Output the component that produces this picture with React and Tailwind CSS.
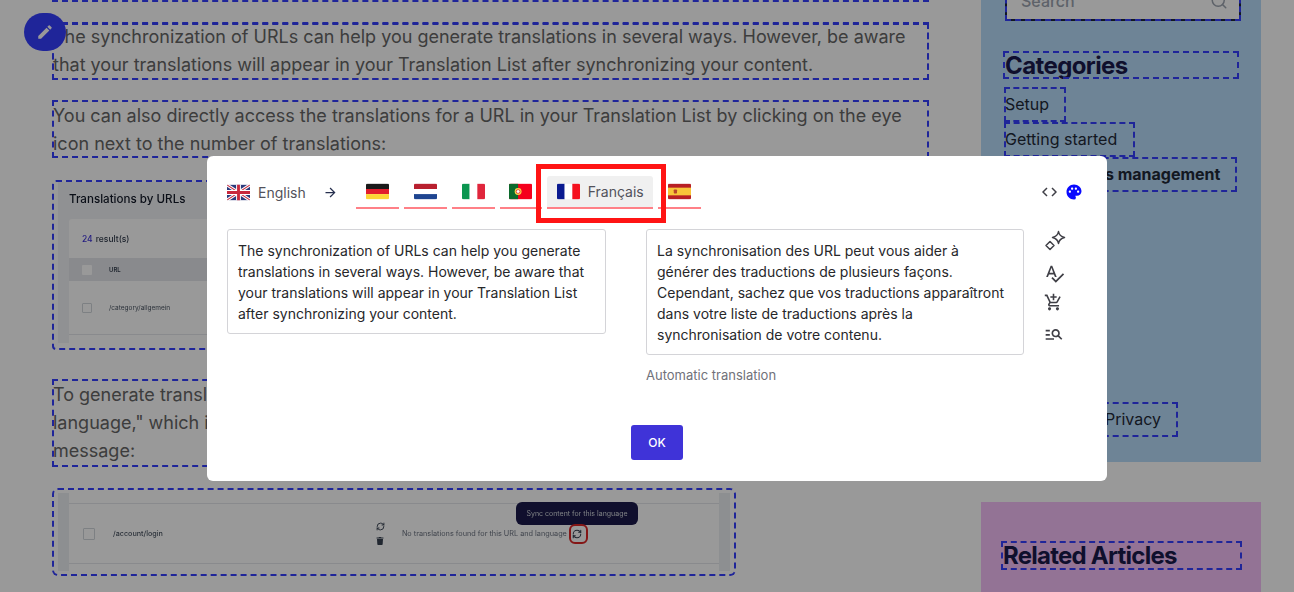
import React from 'react';
import { MdEdit, MdPalette, MdOutlineAddShoppingCart, MdOutlineManageSearch, MdSpellcheck, MdArrowForward } from 'react-icons/md';
import { Search, RefreshCw } from 'lucide-react';
import { FaTrash } from 'react-icons/fa';

// editor highlight drawn around every editable block
const box = 'outline-2 outline-dashed -outline-offset-2 outline-[#353eff]';

const Flag = ({ children }) => (
  <svg viewBox="0 0 24 16" className="w-[23px] h-[17px] rounded-[2px] shrink-0">{children}</svg>
);

const UK = () => (
  <Flag>
    <rect width="24" height="16" fill="#2b3a7c" />
    <path d="M0 0L24 16M24 0L0 16" stroke="#fff" strokeWidth="3.2" />
    <path d="M0 0L24 16M24 0L0 16" stroke="#c8283c" strokeWidth="1.1" />
    <path d="M12 0V16M0 8H24" stroke="#fff" strokeWidth="5" />
    <path d="M12 0V16M0 8H24" stroke="#c8283c" strokeWidth="3" />
  </Flag>
);
const DE = () => (
  <Flag>
    <rect width="24" height="5.4" fill="#1a1a1a" />
    <rect y="5.4" width="24" height="5.3" fill="#e11d2c" />
    <rect y="10.7" width="24" height="5.3" fill="#fcd535" />
  </Flag>
);
const NL = () => (
  <Flag>
    <rect width="24" height="5.4" fill="#b8202f" />
    <rect y="5.4" width="24" height="5.3" fill="#fff" />
    <rect y="10.7" width="24" height="5.3" fill="#1f4590" />
  </Flag>
);
const IT = () => (
  <Flag>
    <rect width="8" height="16" fill="#0b9650" />
    <rect x="8" width="8" height="16" fill="#fff" />
    <rect x="16" width="8" height="16" fill="#e0263c" />
  </Flag>
);
const PT = () => (
  <Flag>
    <rect width="24" height="16" fill="#f5001c" />
    <rect width="9.5" height="16" fill="#0b6a2c" />
    <circle cx="9.5" cy="8" r="3.6" fill="#f8d648" />
    <circle cx="9.5" cy="8" r="2" fill="#fff" stroke="#d22" strokeWidth="0.8" />
  </Flag>
);
const FR = () => (
  <Flag>
    <rect width="8" height="16" fill="#0a1a90" />
    <rect x="8" width="8" height="16" fill="#fff" />
    <rect x="16" width="8" height="16" fill="#f5111f" />
  </Flag>
);
const ES = () => (
  <Flag>
    <rect width="24" height="16" fill="#b81f24" />
    <rect y="4" width="24" height="8" fill="#f8c53a" />
    <rect x="6" y="6" width="3.4" height="4.2" rx="0.8" fill="#b8452a" />
  </Flag>
);

const Sparkle = () => (
  <svg viewBox="0 0 24 24" className="w-[24px] h-[24px]" fill="none" stroke="#3f3f46" strokeWidth="1.5" strokeLinejoin="round">
    <path d="M14.500 2.500c.6 3.600 2 5 6 6-4 1-5.400 2.400-6 6-.6-3.600-2-5-6-6 4-1 5.400-2.400 6-6z" />
    <path d="M6 12.500L10 16.500L6 20.500L2 16.500z" />
  </svg>
);

const CodeIcon = () => (
  <svg viewBox="0 0 15 10" className="w-[15px] h-[10px]" fill="none" stroke="#3f3f46" strokeWidth="1.5">
    <path d="M5 1L1 5L5 9M10 1L14 5L10 9" />
  </svg>
);

const Tab = ({ flag, width, label }) => (
  <div className={`${width} h-[33px] flex items-center justify-center gap-[8px] border-b-2 border-[#ff8087] ${label ? 'bg-[#f0f0f0] rounded-t-[3px] pl-[1px]' : ''}`}>
    {flag}
    {label && <span className="text-[14px] text-[#52525b]">{label}</span>}
  </div>
);

function TranslationModal() {
  return (
    <div className="absolute left-[207px] top-[156px] w-[900px] h-[325px] bg-white rounded-[6px] px-[20px] pt-[20px] text-[#27272a]">
      <div className="flex items-center h-[33px] pb-[1px]">
        <UK />
        <span className="ml-[8px] text-[14px] text-[#52525b]">English</span>
        <MdArrowForward className="ml-[17px] w-[15px] h-[15px] text-[#27304f]" />
        <div className="ml-[18px] flex gap-[5px] self-start">
          <Tab flag={<DE />} width="w-[43px]" />
          <Tab flag={<NL />} width="w-[43px]" />
          <Tab flag={<IT />} width="w-[43px]" />
          <Tab flag={<PT />} width="w-[42px]" />
          <Tab flag={<FR />} width="w-[106px]" label="Français" />
          <Tab flag={<ES />} width="w-[43px]" />
        </div>
        <div className="ml-auto mr-[4px] flex items-center gap-[8px]">
          <CodeIcon />
          <MdPalette className="w-[18px] h-[18px] text-[#0a0aff]" />
        </div>
      </div>
      <div className="mt-[20px] flex items-start">
        <div className="w-[379px] h-[105px] border border-[#d4d4d8] rounded-[3px] px-[10px] py-[10px] text-[14px] leading-[21px]">
          The synchronization of URLs can help you generate translations in several ways. However, be aware that your translations will appear in your Translation List after synchronizing your content.
        </div>
        <div className="ml-[40px] w-[378px]">
          <div className="h-[126px] border border-[#d4d4d8] rounded-[3px] px-[10px] py-[10px] text-[14px] leading-[21px]">
            La synchronisation des URL peut vous aider à générer des traductions de plusieurs façons. Cependant, sachez que vos traductions apparaîtront dans votre liste de traductions après la synchronisation de votre contenu.
          </div>
          <p className="mt-[12px] text-[13px] leading-[16px] text-[#71717a]">Automatic translation</p>
        </div>
        <div className="ml-[20px] flex flex-col items-start text-[#3f3f46]">
          <Sparkle />
          <MdSpellcheck className="mt-[10px] w-[21px] h-[21px]" />
          <MdOutlineAddShoppingCart className="mt-[9px] w-[19px] h-[19px]" />
          <MdOutlineManageSearch className="mt-[12px] w-[20px] h-[20px]" />
        </div>
      </div>
      <div className="absolute left-[424px] top-[269px] w-[52px] h-[35px] rounded-[3px] bg-[#3f33d8] flex items-center justify-center text-white text-[12px] font-medium">OK</div>
      <div className="absolute left-[329px] top-[8px] w-[130px] h-[59px] border-[5px] border-[#ff1414]" />
    </div>
  );
}

function UrlsShot() {
  return (
    <div className={`${box} h-[170px] mt-[22px] rounded-[4px] bg-white overflow-hidden`}>
      <div className="h-[161px] ml-[6px] mt-[2px] bg-[#f1f2f5] pt-[8px] pl-[11px] blur-[0.4px] overflow-hidden">
        <div className="text-[11.600px] leading-[18px] font-medium text-[#111827]">Translations by URLs</div>
        <div className="mt-[11px] bg-white h-[200px] rounded-[3px]">
          <div className="h-[39px] pl-[13px] flex items-center text-[8.500px] font-medium text-[#374151]">
            <span className="text-[#3f33d8] mr-[3px]">24</span>result(s)
          </div>
          <div className="h-[23px] bg-[#e5e7eb] pl-[13px] flex items-center text-[6px] font-semibold text-[#374151]">
            <span className="w-[10px] h-[10px] bg-white rounded-[1px] mr-[17px]" />URL
          </div>
          <div className="h-[54px] pl-[13px] flex items-center text-[6.500px] text-[#4b5563] border-b border-[#e5e7eb]">
            <span className="w-[10px] h-[10px] border border-[#d1d5db] rounded-[1px] mr-[17px]" />/category/allgemein
          </div>
        </div>
      </div>
    </div>
  );
}

function LoginShot() {
  return (
    <div className={`${box} w-[684px] h-[88px] mt-[21px] rounded-[6px] px-[6px] py-[5px] relative`}>
      <div className="h-[78px] bg-white border-x-[11px] border-[#eceef2] flex flex-col blur-[0.4px]">
        <div className="mt-[10px] h-[61px] border-y border-[#e5e7eb] flex items-center text-[#4b5563]">
          <span className="ml-[14px] w-[12px] h-[12px] border border-[#d1d5db] rounded-[1px]" />
          <span className="ml-[18px] text-[7.200px] font-medium">/account/login</span>
          <div className="ml-[213px] flex flex-col items-center gap-[6px] text-[#374151]">
            <RefreshCw size={9} strokeWidth={2.5} />
            <FaTrash size={8} />
          </div>
          <span className="ml-[17px] text-[7.300px] text-[#6b7280]">No translations found for this URL and language</span>
          <RefreshCw size={10} strokeWidth={2.5} className="ml-[5px] text-[#374151]" />
        </div>
      </div>
      {/* tooltip + red highlight on the sync icon */}
      <div className="absolute left-[464px] top-[14px] w-[122px] h-[23px] rounded-[6px] bg-[#1b1a4b] text-[#d1d5db] text-[7px] flex items-center justify-center blur-[0.3px]">Sync content for this language</div>
      <div className="absolute left-[517px] top-[36px] w-[19px] h-[20px] rounded-[6px] border-2 border-[#dc2626]" />
    </div>
  );
}

export default function App() {
  return (
    <div className="relative w-[1294px] h-[592px] overflow-hidden bg-white text-[#1f2937]" style={{ fontFamily: 'Inter, "Liberation Sans", sans-serif' }}>
      <div className="flex items-start">
        <div className="ml-[52px] w-[877px] shrink-0 text-[18px] leading-[28px] text-[#666666]">
          <div className={`${box} h-[10px] -mt-[8px]`} />
          <div className={`${box} mt-[20px] h-[58px] pt-[1px] pl-[1px]`}>
            <div className={`${box} h-[57px] -ml-[1px] pl-[1px]`}>
              The synchronization of URLs can help you generate translations in several ways. However, be aware that your translations will appear in your Translation List after synchronizing your content.
            </div>
          </div>
          <div className={`${box} mt-[20px] h-[58px] pt-[2px] pl-[1px]`}>
            You can also directly access the translations for a URL in your Translation List by clicking on the eye icon next to the number of translations:
          </div>
          <UrlsShot />
          <div className={`${box} mt-[29px] h-[88px] pt-[2px] pl-[1px]`}>
            To generate translations for this URL, click on "Sync content for this<br />
            language," which is displayed next to the following<br />
            message:
          </div>
          <LoginShot />
        </div>

        <div className="ml-[52px] w-[280px] shrink-0">
          <div className="bg-[#b8dcfa] h-[462px] pl-[22px] pr-[22px] flex flex-col items-start">
            <div className={`${box} ml-[2px] -mt-[20px] h-[41px] w-[236px] border-2 border-[#1f2937] bg-white flex items-center justify-between pl-[14px] pr-[11px] text-[16px] font-medium text-[#9ca3af]`}>
              <span>Search</span>
              <Search size={18} />
            </div>
            <div className={`${box} mt-[30px] h-[28px] w-[236px] pl-[2px] text-[24px] leading-[29px] font-bold tracking-[-0.6px] text-[#1a1a4b]`}>Categories</div>
            <div className={`${box} mt-[8px] ml-[1px] w-[62px] h-[35px] pl-[1px] text-[16px] leading-[35px]`}>Setup</div>
            <div className={`${box} ml-[1px] w-[131px] h-[35px] pl-[1px] text-[16px] leading-[35px]`}>Getting started</div>
            <div className={`${box} ml-[1px] w-[233px] h-[35px] pl-[13px] text-[16px] leading-[35px] font-bold`}>Translations management</div>
            <div className={`${box} mt-[210px] ml-[1px] w-[174px] h-[35px] pl-[101px] text-[16px] leading-[35px]`}>Privacy</div>
          </div>
          <div className="mt-[40px] h-[90px] bg-[#f5c0f8] pl-[20px] pt-[39px]">
            <div className={`${box} w-[241px] h-[29px] pl-[2px] text-[24px] leading-[29px] font-bold tracking-[-0.75px] text-[#1a1a4b]`}>Related Articles</div>
          </div>
        </div>
      </div>

      {/* edit button */}
      <div className="absolute left-[24px] top-[13px] w-[42px] h-[38px] rounded-full bg-[#353eff] flex items-center justify-center text-white">
        <MdEdit className="w-[18px] h-[18px]" />
      </div>

      {/* backdrop */}
      <div className="absolute inset-0 bg-black/40" />

      <TranslationModal />
    </div>
  );
}
